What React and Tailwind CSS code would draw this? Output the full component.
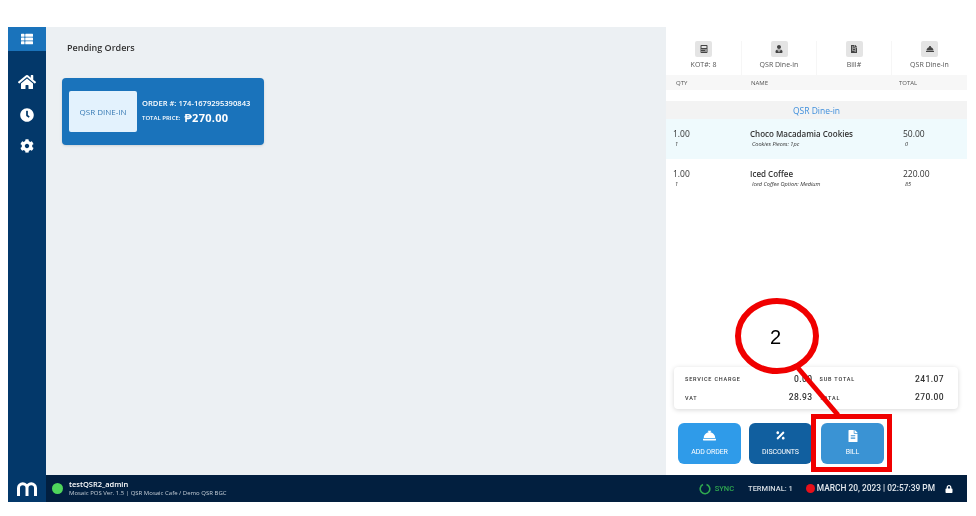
import React from "react";
import {
  FaHome,
  FaClock,
  FaCog,
  FaThList,
  FaConciergeBell,
  FaPercentage,
  FaFileAlt,
  FaLock,
  FaCalculator,
  FaUserTie,
  FaFileInvoice,
} from "react-icons/fa";

const tabs = [
  { icon: FaCalculator, label: "KOT#: 8", w: "w-[76px]" },
  { icon: FaUserTie, label: "QSR Dine-in", w: "w-[75px]" },
  { icon: FaFileInvoice, label: "Bill#", w: "w-[75px]" },
  { icon: FaConciergeBell, label: "QSR Dine-in", w: "w-[75px]" },
];

const items = [
  { name: "Choco Macadamia Cookies", note: "Cookies Pieces: 1pc", total: "50.00", sub: "0", bg: "bg-[#effafd]" },
  { name: "Iced Coffee", note: "Iced Coffee Option: Medium", total: "220.00", sub: "85", bg: "bg-white" },
];

const actions = [
  { icon: FaConciergeBell, label: "ADD ORDER", bg: "bg-[#2f9be9]", ml: "ml-[12px]", size: 13 },
  { icon: FaPercentage, label: "DISCOUNTS", bg: "bg-[#115f9f]", ml: "ml-[8px]", size: 11 },
  { icon: FaFileAlt, label: "BILL", bg: "bg-[#3a93d4]", ml: "ml-[9px]", size: 12 },
];

const Summary = ({ label, value, className = "" }) => (
  <div className={`flex items-center justify-between ${className}`}>
    <span className="text-[5.5px] font-medium tracking-[0.8px] text-[#333]">{label}</span>
    <span className="text-[8.5px] font-medium tracking-[0.4px] text-[#333]">{value}</span>
  </div>
);

export default function App() {
  return (
    <div className="w-[976px] h-[516px] bg-white pt-[27px] px-[8px] overflow-hidden relative font-['Open_Sans',sans-serif] blur-[0.6px]">
      <div className="w-[959px] h-[475px] flex flex-col">
        <div className="flex h-[448px]">
          {/* Sidebar */}
          <div className="w-[38px] bg-[#03386a] flex flex-col items-center shrink-0">
            <div className="w-full h-[24px] bg-[#1a73bb] flex items-center justify-center text-white">
              <FaThList size={12} />
            </div>
            <div className="mt-[22px] flex flex-col items-center gap-[17px] text-white">
              <FaHome size={18} />
              <FaClock size={14} />
              <FaCog size={14} />
            </div>
          </div>

          {/* Pending orders */}
          <div className="w-[620px] bg-[#ecf0f3] pl-[16px] pt-[15px] shrink-0">
            <div className="pl-[5px] text-[9px] font-semibold text-[#333] leading-[12px]">Pending Orders</div>
            <div className="mt-[24px] w-[202px] h-[67px] bg-[#1a73bb] rounded-[4px] flex items-center pl-[7px] shadow-sm">
              <div className="w-[68px] h-[41px] bg-[#e3f2fd] rounded-[2px] flex items-center justify-center text-[8px] text-[#3a7cb5]">
                QSR DINE-IN
              </div>
              <div className="ml-[5px] text-white">
                <div className="text-[7.6px] font-semibold leading-[10px] whitespace-nowrap">ORDER #: 174-1679295390843</div>
                <div className="mt-[3px] flex items-center gap-[4px] leading-[14px]">
                  <span className="text-[6px] font-semibold whitespace-nowrap">TOTAL PRICE:</span>
                  <span className="text-[11px] font-bold tracking-[0.3px] whitespace-nowrap">₱270.00</span>
                </div>
              </div>
            </div>
          </div>

          {/* Order panel */}
          <div className="flex-1 bg-white flex flex-col">
            <div className="flex h-[48px] pt-[14px]">
              {tabs.map((t, i) => (
                <div
                  key={i}
                  className={`${t.w} flex flex-col items-center ${i < 3 ? "border-r border-[#f6f6f6]" : ""}`}
                >
                  <div className="w-[17px] h-[16px] bg-[#e4e4e4] rounded-[2px] flex items-center justify-center text-[#444]">
                    <t.icon size={8} />
                  </div>
                  <div className="mt-[4px] text-[7px] leading-[8px] text-[#555] whitespace-nowrap">{t.label}</div>
                </div>
              ))}
            </div>
            <div className="h-[15px] bg-[#f7f7f7] flex items-center pt-[1px] text-[6px] text-[#555]">
              <span className="ml-[10px] w-[75px]">QTY</span>
              <span className="w-[148px]">NAME</span>
              <span>TOTAL</span>
            </div>
            <div className="mt-[11px] h-[18px] bg-[#f3f3f3] flex items-center justify-center pt-[2px] text-[8.5px] font-medium text-[#3f8fdc]">
              QSR Dine-in
            </div>
            {items.map((it) => (
              <div key={it.name} className={`h-[40px] ${it.bg} flex pt-[9px] text-[#333]`}>
                <div className="ml-[7px] w-[77px]">
                  <div className="text-[8.5px] leading-[12px]">1.00</div>
                  <div className="text-[5.5px] italic leading-[8px] ml-[2px]">1</div>
                </div>
                <div className="w-[153px]">
                  <div className="text-[8px] font-semibold leading-[12px] whitespace-nowrap">{it.name}</div>
                  <div className="text-[5.6px] italic leading-[8px] ml-[2px] whitespace-nowrap">{it.note}</div>
                </div>
                <div>
                  <div className="text-[8.5px] leading-[12px]">{it.total}</div>
                  <div className="text-[5.5px] italic leading-[8px] ml-[2px]">{it.sub}</div>
                </div>
              </div>
            ))}

            <div className="flex-1" />

            {/* Totals */}
            <div className="ml-[8px] mb-[14px] w-[284px] h-[42px] bg-white rounded-[4px] shadow-[0_1px_5px_rgba(0,0,0,0.16)] px-[11px] pt-[6px] pb-[5px] grid grid-cols-2 gap-x-[7px] content-between font-['Roboto',sans-serif]">
              <Summary label="SERVICE CHARGE" value="0.00" />
              <Summary label="SUB TOTAL" value="241.07" className="pr-[3px]" />
              <Summary label="VAT" value="28.93" />
              <Summary label="TOTAL" value="270.00" className="pr-[3px]" />
            </div>

            {/* Actions */}
            <div className="flex mb-[11px] font-['Roboto',sans-serif]">
              {actions.map((a) => (
                <div
                  key={a.label}
                  className={`w-[63px] h-[41px] ${a.bg} ${a.ml} rounded-[6px] flex flex-col items-center pt-[6px] text-white`}
                >
                  <div className="h-[13px] flex items-center">
                    <a.icon size={a.size} />
                  </div>
                  <div className="mt-[6px] text-[7px] leading-[9px] tracking-[-0.1px]">{a.label}</div>
                </div>
              ))}
            </div>
          </div>
        </div>

        {/* Status bar */}
        <div className="flex h-[27px] bg-[#021f3f] text-white">
          <div className="w-[38px] bg-[#03386a] flex items-center justify-center shrink-0">
            <svg width="20" height="14" viewBox="0 0 20 14" fill="none" stroke="white" strokeWidth="3">
              <path d="M1.5 14V6A4.25 4.25 0 0 1 10 6V14M10 6A4.25 4.25 0 0 1 18.5 6V14" />
            </svg>
          </div>
          <div className="ml-[6px] flex items-center">
            <span className="w-[11px] h-[11px] rounded-full bg-[#4fd65b]" />
            <div className="ml-[6px]">
              <div className="text-[7.5px] font-semibold leading-[9px]">testQSR2_admin</div>
              <div className="text-[6px] leading-[8px] text-[#c4cdd6] whitespace-nowrap">
                Mosaic POS Ver. 1.5 | QSR Mosaic Cafe / Demo QSR BGC
              </div>
            </div>
          </div>
          <div className="flex-1" />
          <div className="flex items-center font-['Roboto',sans-serif] font-medium text-[7.5px] pr-[14px]">
            <svg width="12" height="12" viewBox="0 0 12 12" fill="none" stroke="#2fa84f" strokeWidth="1.6">
              <path d="M7.5 1.4A4.8 4.8 0 1 1 4 1.6" />
            </svg>
            <span className="ml-[4px] text-[#2fa84f]">SYNC</span>
            <span className="ml-[14px] text-[#d5dce3] whitespace-nowrap">TERMINAL: 1</span>
            <span className="ml-[13px] w-[9px] h-[9px] rounded-full bg-[#e8101a]" />
            <span className="ml-[2px] text-[8.4px] text-[#e4e9ee] whitespace-nowrap">MARCH 20, 2023 | 02:57:39 PM</span>
            <FaLock size={8} className="ml-[10px]" />
          </div>
        </div>
      </div>

      {/* Callout drawn over the screenshot */}
      <svg className="absolute left-[730px] top-[295px]" width="115" height="125" viewBox="0 0 115 125">
        <ellipse cx="47" cy="41" rx="39" ry="35" fill="white" stroke="#f00000" strokeWidth="6" />
        <line x1="68" y1="73" x2="108" y2="120" stroke="#f00000" strokeWidth="5" />
      </svg>
      <span className="absolute left-[770px] top-[325px] text-[20px] leading-[24px] text-black font-['Liberation_Sans',sans-serif]">2</span>
      <div className="absolute left-[811px] top-[414px] w-[81px] h-[58px] border-[5px] border-[#f00000]" />
    </div>
  );
}
